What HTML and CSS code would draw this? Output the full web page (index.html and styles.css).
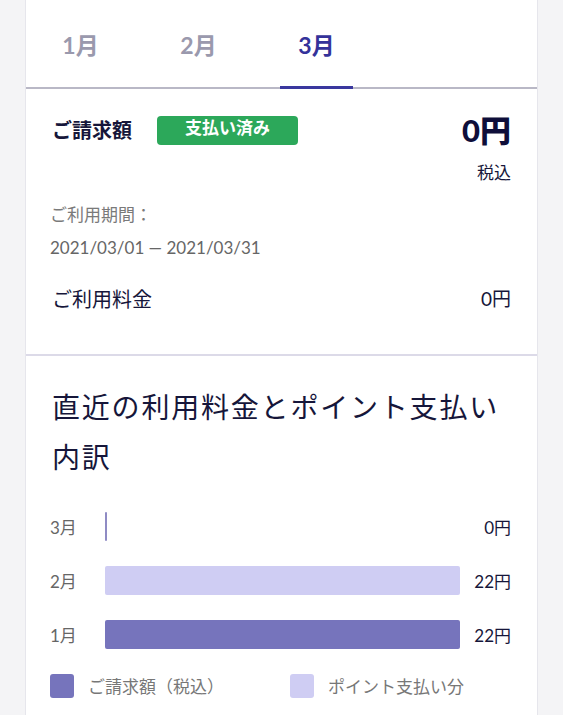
FILE: index.html
```html
<!DOCTYPE html>
<html lang="ja">
<head>
    <meta charset="UTF-8">
    <meta name="viewport" content="width=device-width, initial-scale=1.0">
    <title>ご請求額</title>
    <link rel="stylesheet" href="styles.css">
</head>
<body>
    <div class="card">
        <nav class="tabs">
            <a href="#" class="tab">1月</a>
            <a href="#" class="tab">2月</a>
            <a href="#" class="tab active">3月</a>
        </nav>

        <section class="bill">
            <div class="bill-head">
                <h2>ご請求額</h2>
                <span class="badge">支払い済み</span>
                <span class="bill-total">0円</span>
            </div>
            <div class="tax">税込</div>
            <div class="period">
                <p class="period-label">ご利用期間：</p>
                <p class="period-dates">2021/03/01 — 2021/03/31</p>
            </div>
            <div class="fee-row">
                <span>ご利用料金</span>
                <span>0円</span>
            </div>
        </section>

        <section class="history">
            <h3>直近の利用料金とポイント支払い内訳</h3>
            <div class="chart">
                <div class="chart-row">
                    <span class="month">3月</span>
                    <div class="track"><div class="bar bar-zero"></div></div>
                    <span class="amount">0円</span>
                </div>
                <div class="chart-row">
                    <span class="month">2月</span>
                    <div class="track"><div class="bar bar-point" style="width: 100%"></div></div>
                    <span class="amount">22円</span>
                </div>
                <div class="chart-row">
                    <span class="month">1月</span>
                    <div class="track"><div class="bar bar-bill" style="width: 100%"></div></div>
                    <span class="amount">22円</span>
                </div>
            </div>
            <div class="legend">
                <div class="legend-item"><span class="swatch bar-bill"></span>ご請求額（税込）</div>
                <div class="legend-item"><span class="swatch bar-point"></span>ポイント支払い分</div>
            </div>
        </section>
    </div>
</body>
</html>
```

FILE: styles.css
```css
body {
    margin: 0;
    padding: 0;
    font-family: 'Lato', 'Noto Sans CJK JP', sans-serif;
    background-color: #f4f4f6;
    color: #16163a;
}

.card {
    width: 511px;
    margin-left: 25px;
    background-color: #fff;
    border-left: 1px solid #e6e6ec;
    border-right: 1px solid #e6e6ec;
    min-height: 715px;
}

.tabs {
    display: flex;
    gap: 45px;
    padding-left: 18px;
    height: 87px;
    border-bottom: 2px solid #b9b8c6;
}

.tab {
    width: 73px;
    display: flex;
    align-items: center;
    justify-content: center;
    font-size: 23px;
    font-weight: bold;
    color: #9a99ad;
    text-decoration: none;
    margin-bottom: -2px;
    border-bottom: 3px solid transparent;
    padding-top: 1px;
}

.tab.active {
    color: #34329a;
    border-bottom-color: #3a389e;
}

.bill {
    padding: 25px 26px 0 26px;
    height: 240px;
    border-bottom: 2px solid #dcdae8;
}

.bill-head {
    display: flex;
    align-items: center;
    height: 32px;
}

.bill-head h2 {
    margin: 0;
    font-size: 20px;
    font-weight: bold;
    line-height: 32px;
}

.badge {
    margin-left: 25px;
    background-color: #2ca85a;
    color: #fff;
    font-size: 17px;
    font-weight: bold;
    border-radius: 4px;
    width: 141px;
    height: 29px;
    text-align: center;
    line-height: 24px;
}

.bill-total {
    margin-left: auto;
    font-size: 31px;
    font-weight: 900;
    color: #0e0e3a;
    line-height: 32px;
}

.tax {
    text-align: right;
    font-size: 17px;
    margin-top: 15px;
    line-height: 24px;
}

.period {
    margin-top: 18px;
    margin-left: -2px;
    font-size: 17px;
    color: #7a7a7a;
}

.period p {
    margin: 0;
    line-height: 24px;
}

.period .period-dates {
    margin-top: 9px;
    color: #666;
}

.fee-row {
    display: flex;
    justify-content: space-between;
    margin-top: 25px;
    font-size: 20px;
    line-height: 28px;
}

.fee-row span:last-child {
    font-size: 19px;
}

.history {
    padding: 26px 26px 0 26px;
}

.history h3 {
    margin: 0;
    font-size: 28px;
    font-weight: normal;
    line-height: 50px;
    letter-spacing: 1.8px;
    padding-right: 6px;
}

.chart {
    margin-top: 30px;
    margin-left: -2px;
    display: flex;
    flex-direction: column;
    gap: 25px;
}

.chart-row {
    display: flex;
    align-items: center;
    height: 29px;
}

.month {
    width: 55px;
    font-size: 17px;
    color: #666;
}

.track {
    flex: 1;
    height: 29px;
}

.bar {
    height: 100%;
    border-radius: 2px;
}

.bar-zero {
    width: 2px;
    background-color: #8f8bc4;
}

.bar-point {
    background-color: #cfcdf3;
}

.bar-bill {
    background-color: #7674bc;
}

.amount {
    width: 51px;
    text-align: right;
    font-size: 17px;
}

.legend {
    display: flex;
    margin-top: 24px;
    margin-left: -2px;
    font-size: 17px;
    color: #777;
}

.legend-item {
    flex: none;
    display: flex;
    align-items: center;
    width: 240px;
}

.swatch {
    flex: none;
    width: 24px;
    height: 24px;
    border-radius: 3px;
    margin-right: 14px;
}
```
